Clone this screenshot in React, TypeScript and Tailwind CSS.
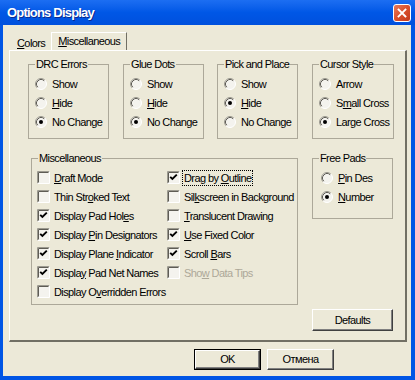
import React from "react";

function Radio({ checked }: { checked?: boolean }) {
  return (
    <svg width="12" height="12" viewBox="0 0 12 12" className="shrink-0">
      <circle cx="6" cy="6" r="5.5" fill="#f4f3ee" />
      <path d="M2.11 9.89 A5.5 5.5 0 0 1 9.89 2.11" fill="none" stroke="#9c9a90" strokeWidth="1" />
      <path d="M2.82 9.18 A4.5 4.5 0 0 1 9.18 2.82" fill="none" stroke="#5e5c55" strokeWidth="1" />
      <path d="M9.89 2.11 A5.5 5.5 0 0 1 2.11 9.89" fill="none" stroke="#ffffff" strokeWidth="1" />
      {checked && <circle cx="6" cy="6" r="2" fill="#000" />}
    </svg>
  );
}

function Check({ checked }: { checked?: boolean }) {
  return (
    <svg width="13" height="13" viewBox="0 0 13 13" className="shrink-0">
      <rect x="1" y="1" width="11" height="11" fill="#f4f3ee" />
      <path d="M0.5 12.5 V0.5 H12.5" fill="none" stroke="#9c9a90" strokeWidth="1" />
      <path d="M1.5 11.5 V1.5 H11.5" fill="none" stroke="#5e5c55" strokeWidth="1" />
      <path d="M12.5 0.5 V12.5 H0.5" fill="none" stroke="#ffffff" strokeWidth="1" />
      {checked && (
        <polyline points="3.2,5.8 5.4,8 9.8,3.6" fill="none" stroke="#000" strokeWidth="1.9" />
      )}
    </svg>
  );
}

function U({ children }: { children: React.ReactNode }) {
  return <span className="underline underline-offset-[1px]">{children}</span>;
}

function Group({
  label,
  className,
  children,
}: {
  label: string;
  className: string;
  children: React.ReactNode;
}) {
  return (
    <div className={"relative border border-[#aca899] " + className}>
      <span className="absolute -top-[8px] left-[6px] bg-[#ece9d8] px-[1px] leading-[14px] whitespace-nowrap">{label}</span>
      {children}
    </div>
  );
}

function RadioRow({ checked, children }: { checked?: boolean; children: React.ReactNode }) {
  return (
    <div className="flex items-center h-[19px] gap-[5px]">
      <Radio checked={checked} />
      <span className="leading-[14px] whitespace-nowrap">{children}</span>
    </div>
  );
}

function CheckRow({
  checked,
  children,
  disabled,
  focus,
}: {
  checked?: boolean;
  children: React.ReactNode;
  disabled?: boolean;
  focus?: boolean;
}) {
  return (
    <div className="flex items-center h-[19px] gap-[3px]">
      <Check checked={checked} />
      <span
        className={
          "leading-[14px] px-[1px] whitespace-nowrap " +
          (disabled ? "text-[#aca899] " : "") +
          (focus ? "outline outline-1 outline-dotted outline-black" : "")
        }
      >
        {children}
      </span>
    </div>
  );
}

function Button({ children, isDefault, className }: { children: React.ReactNode; isDefault?: boolean; className: string }) {
  const inner = (
    <div className="w-full h-full flex items-center justify-center border border-t-white border-l-white border-r-[#404040] border-b-[#404040] shadow-[inset_-1px_-1px_0_#808080]">
      {children}
    </div>
  );
  return (
    <div className={(isDefault ? "border border-black " : "") + className}>{inner}</div>
  );
}

export default function App() {
  return (
    <div className="w-[415px] h-[380px] flex flex-col bg-[#0055e5] text-[11px] tracking-[-0.6px] text-black font-['Liberation_Sans',Arial,sans-serif] overflow-hidden">
      {/* Title bar */}
      <div className="h-[25px] shrink-0 flex items-center pl-[7px] pr-[4px] bg-gradient-to-b from-[#1c6ef2] via-[#0057e6] to-[#0050dd]">
        <span className="text-white font-bold text-[13px] tracking-[-0.8px] [text-shadow:1px_1px_0_#0a2a8f]">
          Options Display
        </span>
        <div className="ml-auto w-[18px] h-[18px] rounded-[3px] border border-white bg-gradient-to-br from-[#e8795a] via-[#d9502c] to-[#c2381a] flex items-center justify-center">
          <svg width="10" height="10" viewBox="0 0 10 10">
            <path d="M1.5 1.5 L8.5 8.5 M8.5 1.5 L1.5 8.5" stroke="#fff" strokeWidth="1.8" strokeLinecap="square" />
          </svg>
        </div>
      </div>

      {/* Body frame */}
      <div className="flex-1 flex flex-col ml-[3px] mr-[4px] mb-[4px] bg-[#ece9d8]">
        {/* Tabs */}
        <div className="h-[25px] shrink-0 flex items-end pl-[6px]">
          <div className="h-[15px] pl-[8px] pr-[6px] flex items-start pt-[1px] leading-[14px]">
            <U>C</U>olors
          </div>
          <div className="h-[18px] pl-[6px] pr-[6px] flex items-start pt-[1px] leading-[14px] border-r border-r-[#716f64] border-l border-l-white border-t border-t-white">
            <U>M</U>iscellaneous
          </div>
        </div>

        {/* Panel */}
        <div className="ml-[6px] w-[398px] h-[292px] border-t border-l border-t-white border-l-white border-r-2 border-b-2 border-r-[#716f64] border-b-[#716f64] flex flex-col pl-[18px] pt-[13px]">
          <div className="flex">
            <Group label="DRC Errors" className="w-[81px] h-[75px] pt-[9px] pl-[6px]">
              <RadioRow>Show</RadioRow>
              <RadioRow><U>H</U>ide</RadioRow>
              <RadioRow checked>No Change</RadioRow>
            </Group>
            <Group label="Glue Dots" className="ml-[14px] w-[81px] h-[75px] pt-[9px] pl-[6px]">
              <RadioRow>Show</RadioRow>
              <RadioRow><U>H</U>ide</RadioRow>
              <RadioRow checked>No Change</RadioRow>
            </Group>
            <Group label="Pick and Place" className="ml-[13px] w-[81px] h-[75px] pt-[9px] pl-[6px]">
              <RadioRow>Show</RadioRow>
              <RadioRow checked><U>H</U>ide</RadioRow>
              <RadioRow>No Change</RadioRow>
            </Group>
            <Group label="Cursor Style" className="ml-[14px] w-[82px] h-[75px] pt-[9px] pl-[6px]">
              <RadioRow>Arrow</RadioRow>
              <RadioRow>S<U>m</U>all Cross</RadioRow>
              <RadioRow checked>Large Cross</RadioRow>
            </Group>
          </div>

          <div className="flex mt-[19px] h-[173px]">
            <Group label="Miscellaneous" className="ml-[3px] w-[267px] h-[147px] pt-[9px] pl-[5px]">
              <div className="grid grid-cols-[130px_1fr]">
                <div className="flex flex-col">
                  <CheckRow><U>D</U>raft Mode</CheckRow>
                  <CheckRow>Thin Str<U>o</U>ked Text</CheckRow>
                  <CheckRow checked>Display Pad Hol<U>e</U>s</CheckRow>
                  <CheckRow checked>Display <U>P</U>in Designators</CheckRow>
                  <CheckRow checked>Display Plane <U>I</U>ndicator</CheckRow>
                  <CheckRow checked>Displa<U>y</U> Pad Net Names</CheckRow>
                  <CheckRow>Display O<U>v</U>erridden Errors</CheckRow>
                </div>
                <div className="flex flex-col">
                  <CheckRow checked focus>Drag by <U>O</U>utline</CheckRow>
                  <CheckRow>Sil<U>k</U>screen in Background</CheckRow>
                  <CheckRow><U>T</U>ranslucent Drawing</CheckRow>
                  <CheckRow checked><U>U</U>se Fixed Color</CheckRow>
                  <CheckRow checked>Scroll <U>B</U>ars</CheckRow>
                  <CheckRow disabled>Sho<U>w</U> Data Tips</CheckRow>
                </div>
              </div>
            </Group>
            <div className="ml-[14px] w-[81px] flex flex-col">
              <Group label="Free Pads" className="w-[81px] h-[61px] pt-[9px] pl-[8px]">
                <RadioRow><U>P</U>in Des</RadioRow>
                <RadioRow checked><U>N</U>umber</RadioRow>
              </Group>
              <Button className="mt-auto w-[81px] h-[22px]">Defaults</Button>
            </div>
          </div>
        </div>

        {/* Bottom buttons */}
        <div className="flex mt-[7px] ml-[191px]">
          <Button isDefault className="w-[67px] h-[21px]">OK</Button>
          <Button className="ml-[6px] w-[67px] h-[21px]">Отмена</Button>
        </div>
      </div>
    </div>
  );
}
